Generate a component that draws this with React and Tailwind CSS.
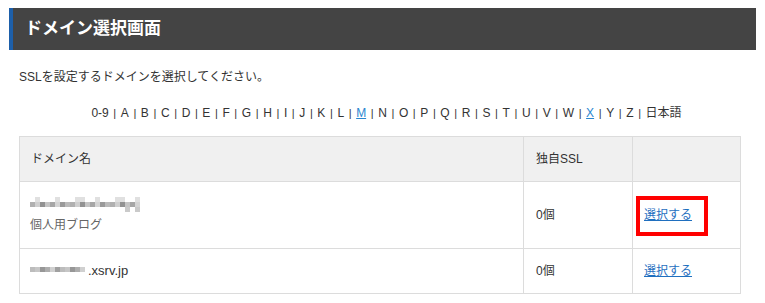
const font = { fontFamily: '"Liberation Sans", "Noto Sans CJK JP", sans-serif' };

const letters = [
  "0-9", "A", "B", "C", "D", "E", "F", "G", "H", "I", "J", "K", "L", "M",
  "N", "O", "P", "Q", "R", "S", "T", "U", "V", "W", "X", "Y", "Z", "日本語",
];
const linked = ["M", "X"];

// blurred (mosaic) domain names
const Mosaic = ({ cells, w, h }) => (
  <svg width={w} height={h} className="block">
    {cells.map(([x, y, c], i) => (
      <rect key={i} x={x * 5} y={y * 5} width="5" height="5" fill={c} />
    ))}
  </svg>
);

const row1 = [];
const tones1 = ["#b0b0b0", "#c4c4c4", "#9a9a9a", "#cfcfcf", "#a6a6a6", "#bababa", "#929292", "#d4d4d4"];
for (let i = 0; i < 22; i++) {
  row1.push([i, 1, tones1[(i * 3) % 8]]);
  if (i % 4 === 1 || i === 10 || i === 18) row1.push([i, 0, "#e0e0e0"]);
  if (i === 21 || i === 19) row1.push([i, 2, "#cacaca"]);
}
const row2 = [];
const tones2 = ["#bcbcbc", "#a0a0a0", "#d0d0d0", "#adadad", "#979797", "#c6c6c6"];
for (let i = 0; i < 11; i++) {
  row2.push([i, 0, tones2[(i * 5) % 6]]);
}

const App = () => {
  return (
    <div className="w-[765px] h-[303px] bg-white text-[#333] pt-[8px]" style={font}>
      <div className="mx-[9px] h-[42px] bg-[#444444] border-l-4 border-[#1d5fa9] flex items-center pl-[12px]">
        <h1 className="text-white font-bold text-[17px]">ドメイン選択画面</h1>
      </div>

      <div className="pl-[19px] w-[741px]">
        <p className="text-[12px] leading-[18px] mt-[18px]">SSLを設定するドメインを選択してください。</p>

        <div className="flex justify-center items-center gap-[4.6px] text-[12px] leading-[18px] mt-[18px] pl-[13px]">
          {letters.map((l, i) => (
            <div key={l} className="flex items-center gap-[4.6px]">
              {i > 0 && <span className="text-[11px]">|</span>}
              {linked.includes(l) ? (
                <a href="#" className="text-[#2a86cf] underline">{l}</a>
              ) : (
                <span>{l}</span>
              )}
            </div>
          ))}
        </div>

        <table className="mt-[14px] w-[722px] border-collapse text-[12px]">
          <thead>
            <tr className="h-[45px] bg-[#f0f0f0]">
              <th className="border border-[#dcdcdc] text-left font-normal pl-[11px]">ドメイン名</th>
              <th className="border border-[#dcdcdc] text-left font-normal pl-[12px] w-[109px]">独自SSL</th>
              <th className="border border-[#dcdcdc] w-[108px]"></th>
            </tr>
          </thead>
          <tbody>
            <tr className="h-[67px]">
              <td className="border border-[#dcdcdc] pl-[10px]">
                <Mosaic cells={row1} w={110} h={15} />
                <div className="text-[#666] mt-[4px]">個人用ブログ</div>
              </td>
              <td className="border border-[#dcdcdc] pl-[12px]">0個</td>
              <td className="border border-[#dcdcdc] pl-[11px] relative">
                <a href="#" className="text-[#1f6fbf] underline">選択する</a>
                <div className="absolute left-[3px] top-[14px] w-[72px] h-[40px] border-4 border-[#ff0000]"></div>
              </td>
            </tr>
            <tr className="h-[45px]">
              <td className="border border-[#dcdcdc] pl-[10px]">
                <div className="flex items-center gap-[3px]">
                  <Mosaic cells={row2} w={55} h={9} />
                  <span className="text-[13px]">.xsrv.jp</span>
                </div>
              </td>
              <td className="border border-[#dcdcdc] pl-[12px]">0個</td>
              <td className="border border-[#dcdcdc] pl-[11px]">
                <a href="#" className="text-[#1f6fbf] underline">選択する</a>
              </td>
            </tr>
          </tbody>
        </table>
      </div>
    </div>
  );
};

export default App;
